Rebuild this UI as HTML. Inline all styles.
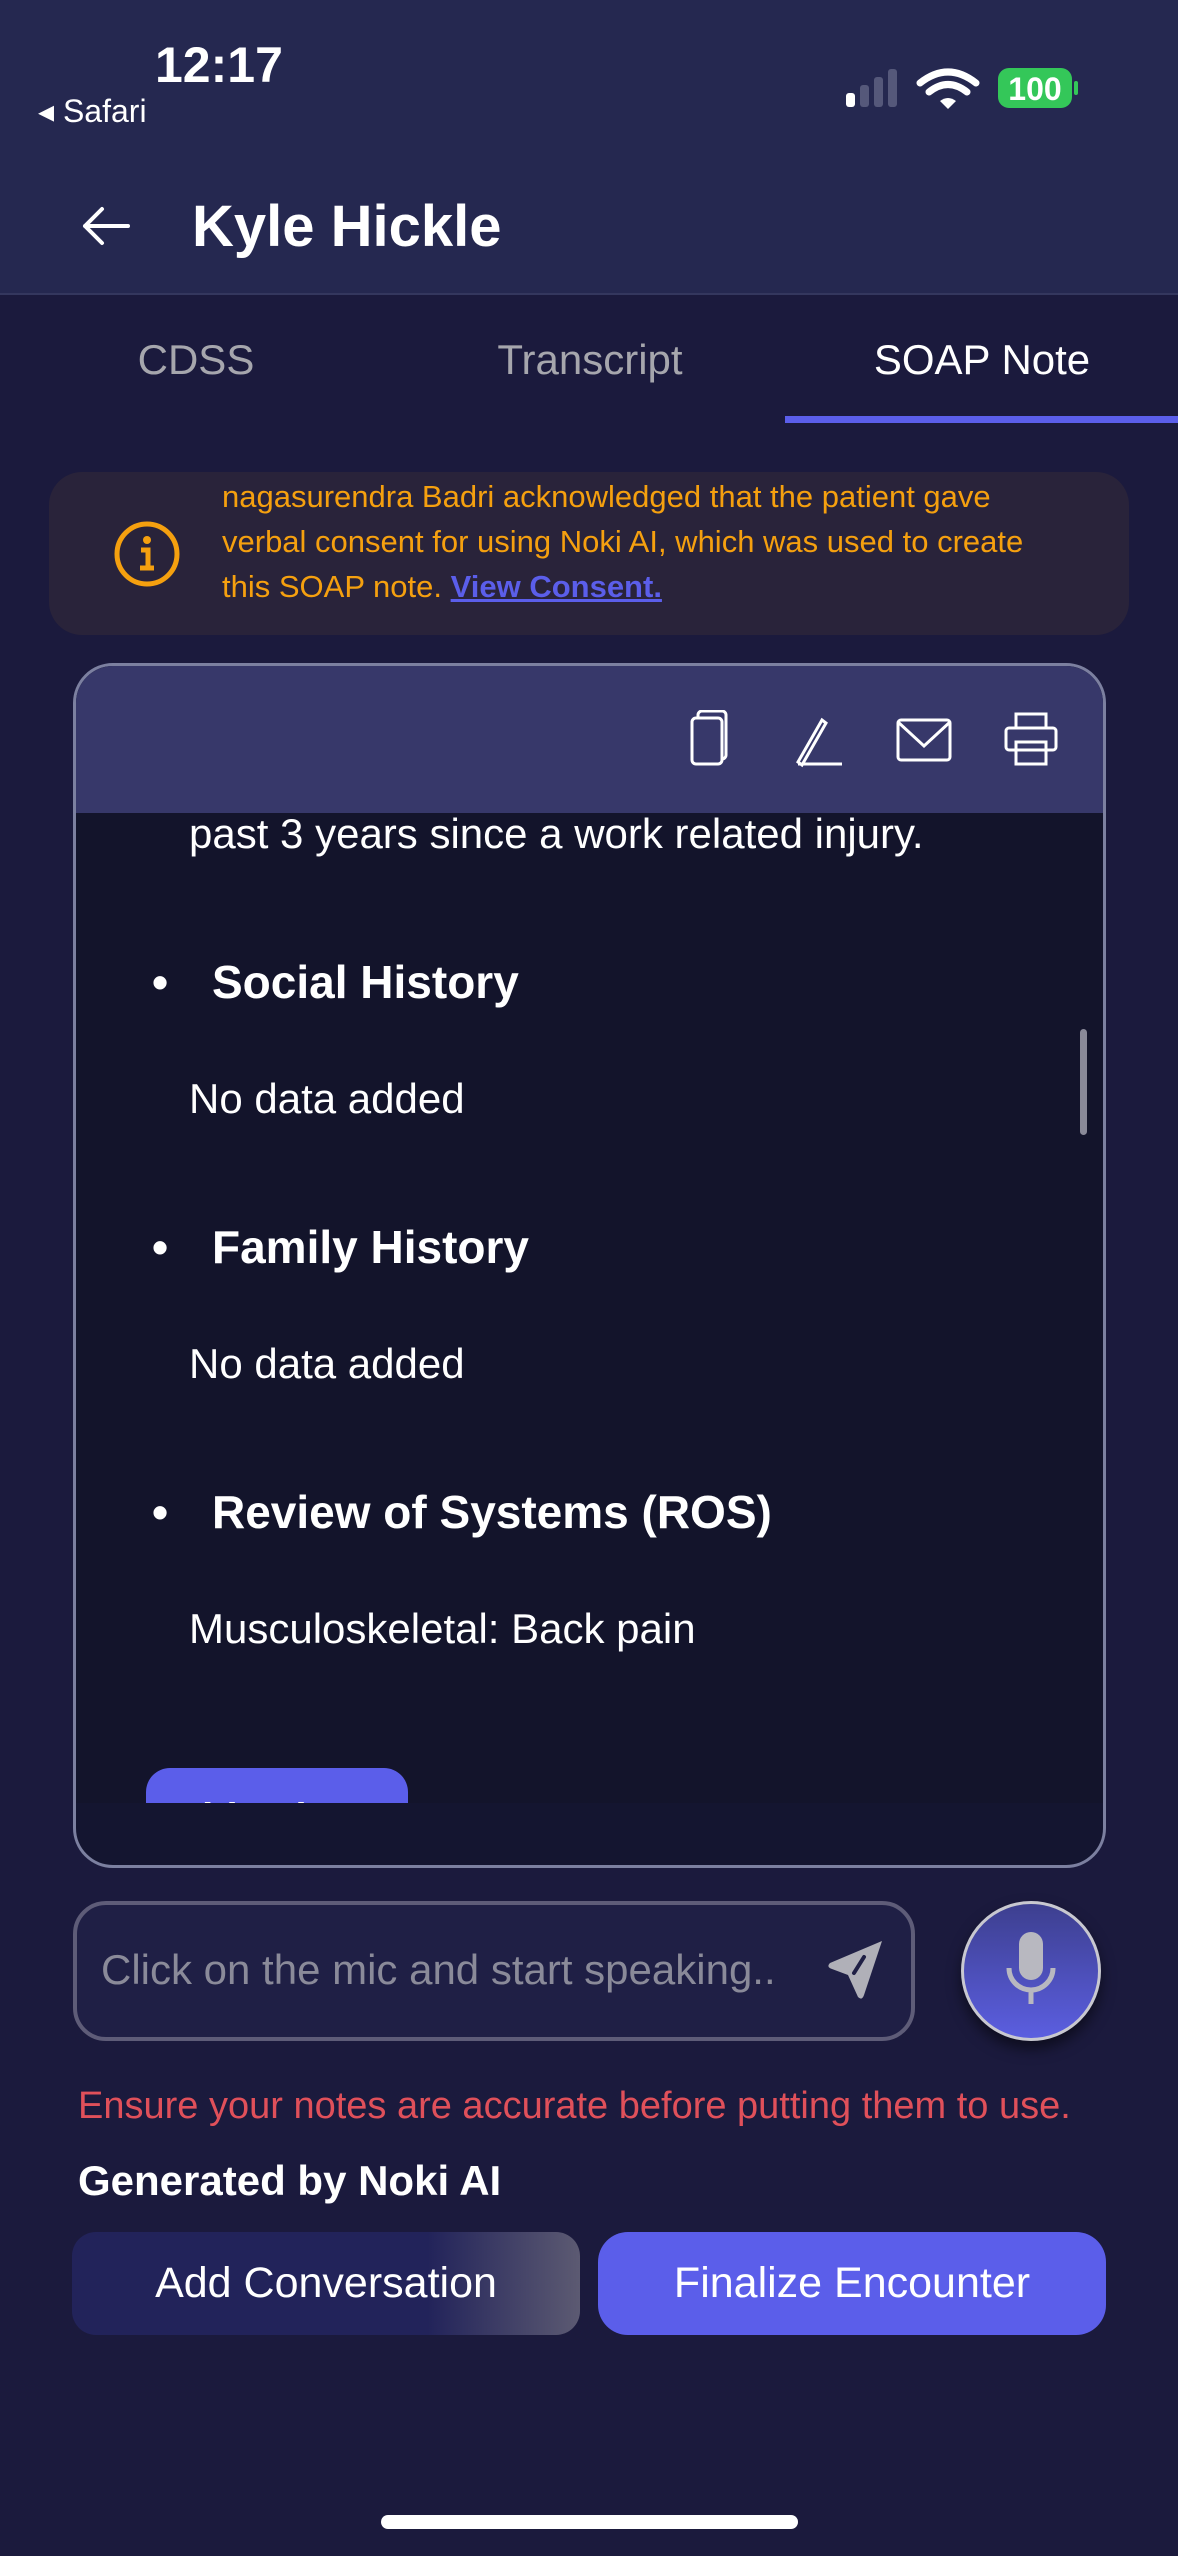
<!DOCTYPE html>
<html><head><meta charset="utf-8"><style>
*{margin:0;padding:0;box-sizing:border-box}
body{width:1178px;height:2556px;background:#1b1a3d;font-family:"Liberation Sans",sans-serif;position:relative;overflow:hidden;color:#fff}
.a{position:absolute;white-space:nowrap}
</style></head><body>
<div class="a" style="left:0;top:0;width:1178px;height:295px;background:#252850;border-bottom:2px solid #34375e"></div>
<div class="a" style="left:155px;top:36px;font-size:50px;font-weight:bold;">12:17</div>
<div class="a" style="left:38px;top:92px;font-size:32px;">◂ Safari</div>
<svg class="a" style="left:840px;top:65px" width="250" height="50" viewBox="0 0 250 50">
<rect x="6" y="28" width="9" height="14" rx="3" fill="#fff"/><rect x="20" y="20" width="9" height="22" rx="3" fill="#55587a"/><rect x="34" y="12" width="9" height="30" rx="3" fill="#55587a"/><rect x="48" y="4" width="9" height="38" rx="3" fill="#55587a"/>
<path d="M80 18 Q108 -4 136 18" stroke="#fff" stroke-width="7" fill="none" stroke-linecap="round"/><path d="M89 27 Q108 12 127 27" stroke="#fff" stroke-width="7" fill="none" stroke-linecap="round"/><path d="M100 36 L108 44 L116 36 Q108 30 100 36Z" fill="#fff"/>
<rect x="158" y="3" width="74" height="40" rx="11" fill="#34c759"/><rect x="234" y="16" width="4" height="14" rx="2" fill="#34c759"/>
<text x="195" y="35" font-size="32" font-weight="bold" fill="#fff" text-anchor="middle" font-family="Liberation Sans">100</text></svg>
<svg class="a" style="left:80px;top:205px" width="52" height="42" viewBox="0 0 52 42"><path d="M48 21H5M22 4L5 21L22 38" stroke="#fff" stroke-width="4" fill="none" stroke-linecap="round" stroke-linejoin="round"/></svg>
<div class="a" style="left:192px;top:193px;font-size:58px;font-weight:bold;">Kyle Hickle</div>
<div class="a" style="left:96px;top:336px;width:200px;text-align:center;font-size:42px;color:#a6a6ad">CDSS</div>
<div class="a" style="left:440px;top:336px;width:300px;text-align:center;font-size:42px;color:#a6a6ad">Transcript</div>
<div class="a" style="left:832px;top:336px;width:300px;text-align:center;font-size:42px;color:#fff">SOAP Note</div>
<div class="a" style="left:785px;top:416px;width:393px;height:7px;background:#5b5eea"></div>
<div class="a" style="left:49px;top:472px;width:1080px;height:163px;border-radius:33px;background:#29233a"></div>
<svg class="a" style="left:113px;top:520px" width="68" height="68" viewBox="0 0 68 68"><circle cx="34" cy="34" r="30" stroke="#f5a00f" stroke-width="5" fill="none"/><circle cx="34" cy="20" r="4" fill="#f5a00f"/><path d="M28 30h7v18M27 48h14" stroke="#f5a00f" stroke-width="5" fill="none"/></svg>
<div class="a" style="left:222px;top:474px;font-size:31px;line-height:45px;color:#f5a00f;white-space:normal;width:845px">nagasurendra Badri acknowledged that the patient gave verbal consent for using Noki AI, which was used to create this SOAP note. <span style="color:#5b5eea;text-decoration:underline;font-weight:bold">View Consent.</span></div>
<div class="a" style="left:73px;top:663px;width:1033px;height:1205px;border-radius:40px;border:3px solid #7c80a0;background:#141530;overflow:hidden">
<div class="a" style="left:0;top:0;width:1030px;height:147px;background:#37386a"></div>
<div class="a" style="left:0;top:147px;width:1030px;height:990px;background:#13142b;overflow:hidden">
<div class="a" style="left:113px;top:-3px;font-size:42px;">past 3 years since a work related injury.</div>
<div class="a" style="left:76px;top:142px;font-size:46px;font-weight:bold">•</div>
<div class="a" style="left:136px;top:142px;font-size:46px;font-weight:bold">Social History</div>
<div class="a" style="left:113px;top:262px;font-size:42px;">No data added</div>
<div class="a" style="left:76px;top:407px;font-size:46px;font-weight:bold">•</div>
<div class="a" style="left:136px;top:407px;font-size:46px;font-weight:bold">Family History</div>
<div class="a" style="left:113px;top:527px;font-size:42px;">No data added</div>
<div class="a" style="left:76px;top:672px;font-size:46px;font-weight:bold">•</div>
<div class="a" style="left:136px;top:672px;font-size:46px;font-weight:bold">Review of Systems (ROS)</div>
<div class="a" style="left:113px;top:792px;font-size:42px;">Musculoskeletal: Back pain</div>
<div class="a" style="left:70px;top:955px;width:262px;height:70px;border-radius:24px;background:#5b5eea;font-size:40px;font-weight:bold;padding:28px 25px">Objective</div>
<div class="a" style="left:1004px;top:216px;width:7px;height:106px;border-radius:4px;background:#8a8a99"></div>
</div>
<svg class="a" style="left:610px;top:44px" width="400" height="60" viewBox="0 0 400 60" fill="none" stroke="#fff" stroke-width="3">
<rect x="6" y="8" width="30" height="46" rx="4"/><path d="M12 8V5a4 4 0 0 1 4-4h20a4 4 0 0 1 4 4v40a4 4 0 0 1-4 4"/>
<path d="M112 54h44M112 52l24-42 4 3-24 42z"/>
<rect x="212" y="10" width="52" height="40" rx="3"/><path d="M212 12l26 24 26-24"/>
<rect x="330" y="4" width="30" height="14"/><rect x="320" y="18" width="50" height="22" rx="3"/><rect x="330" y="32" width="30" height="22"/>
</svg>
</div>
<div class="a" style="left:73px;top:1901px;width:842px;height:140px;border-radius:33px;border:4px solid #5e5c78;background:#1f1f45"></div>
<div class="a" style="left:101px;top:1946px;font-size:42px;color:#8a8a99">Click on the mic and start speaking..</div>
<svg class="a" style="left:820px;top:1935px" width="70" height="70" viewBox="0 0 70 70"><path d="M62 6L10 28Q6 32 12 34L28 40L38 62Q42 66 44 60Z" fill="#b0b0b8"/><path d="M34 38L44 22" stroke="#1f1f45" stroke-width="4" stroke-linecap="round"/></svg>
<div class="a" style="left:961px;top:1901px;width:140px;height:140px;border-radius:50%;border:3px solid #c8c8d0;background:linear-gradient(#3d3f8f,#5b5ee0);box-shadow:0 8px 14px rgba(0,0,0,.5)"></div>
<svg class="a" style="left:1001px;top:1928px" width="60" height="90" viewBox="0 0 60 90"><rect x="18" y="4" width="24" height="48" rx="12" fill="#b8b8c0"/><path d="M8 40a22 22 0 0 0 44 0M30 62v14" stroke="#b8b8c0" stroke-width="5" fill="none"/></svg>
<div class="a" style="left:78px;top:2085px;font-size:38px;color:#e0505a">Ensure your notes are accurate before putting them to use.</div>
<div class="a" style="left:78px;top:2157px;font-size:42px;font-weight:bold">Generated by Noki AI</div>
<div class="a" style="left:72px;top:2232px;width:508px;height:103px;border-radius:24px;background:linear-gradient(90deg,#22235a 0%,#22235a 70%,#5c5a72 100%);font-size:43px;text-align:center;line-height:103px">Add Conversation</div>
<div class="a" style="left:598px;top:2232px;width:508px;height:103px;border-radius:30px;background:#5b5eea;font-size:43px;text-align:center;line-height:103px">Finalize Encounter</div>
<div class="a" style="left:381px;top:2515px;width:417px;height:14px;border-radius:7px;background:#fff"></div>
</body></html>
